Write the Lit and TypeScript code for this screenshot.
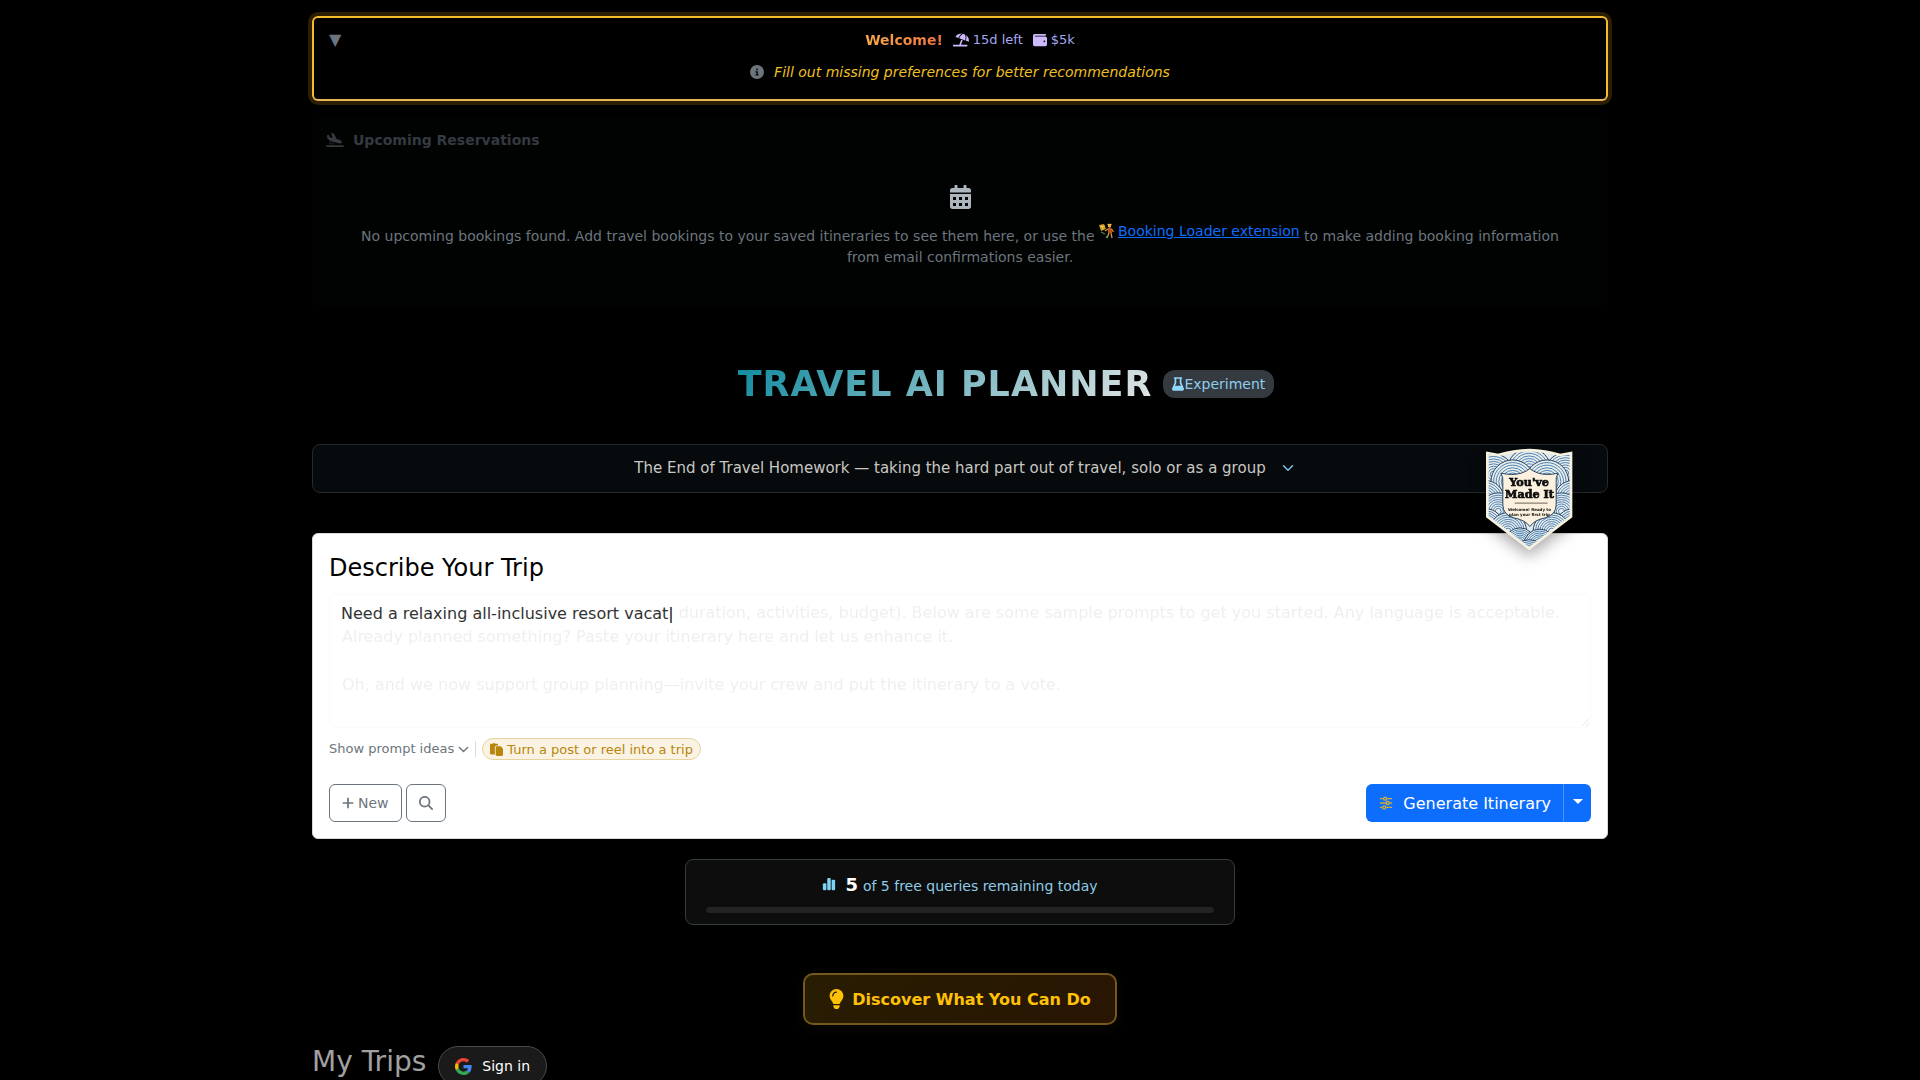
import { LitElement, html, css, svg } from "lit";
import { customElement, state } from "lit/decorators.js";

const google = svg`
  <path fill="#EA4335" d="M24 9.5c3.54 0 6.71 1.22 9.21 3.6l6.85-6.85C35.9 2.38 30.47 0 24 0 14.62 0 6.51 5.38 2.56 13.22l7.98 6.19C12.43 13.72 17.74 9.5 24 9.5z"/>
  <path fill="#4285F4" d="M46.98 24.55c0-1.57-.15-3.09-.38-4.55H24v9.02h12.94c-.58 2.96-2.26 5.48-4.78 7.18l7.73 6c4.51-4.18 7.09-10.36 7.09-17.65z"/>
  <path fill="#FBBC05" d="M10.53 28.59A14.5 14.5 0 0 1 9.77 24c0-1.6.27-3.14.76-4.59l-7.98-6.19A23.93 23.93 0 0 0 0 24c0 3.88.92 7.54 2.56 10.78l7.97-6.19z"/>
  <path fill="#34A853" d="M24 48c6.48 0 11.93-2.13 15.89-5.81l-7.73-6c-2.15 1.45-4.92 2.3-8.16 2.3-6.26 0-11.57-4.22-13.47-9.91l-7.98 6.19C6.51 42.62 14.62 48 24 48z"/>`;

const icons = {
  beach: svg`<path d="M115.38 136.9l102.11 37.18c35.19-81.54 86.21-144.29 139-173.7-95.88-4.89-188.78 36.96-248.53 111.8-6.69 8.4-2.66 21.05 7.42 24.72zm132.25 48.16l238.48 86.83c35.76-121.38 18.7-231.66-42.63-253.98-7.4-2.7-15.13-4-23.09-4-58.02.01-128.27 69.17-172.76 171.15zM521.48 60.5c6.22 16.3 10.83 34.6 13.2 55.19 5.74 49.89-1.42 108.23-18.95 166.98l102.62 37.36c10.09 3.67 21.31-3.43 21.57-14.17 2.32-95.69-41.91-187.44-118.44-245.36zM560 447.98H321.06L386 269.5l-60.14-21.9-72.9 200.37H16c-8.84 0-16 7.16-16 16.01v32.01C0 504.83 7.16 512 16 512h544c8.84 0 16-7.17 16-16.01v-32.01c0-8.84-7.16-16-16-16z"/>`,
  wallet: svg`<path fill-rule="evenodd" d="M64 32C28.700 32 0 60.700 0 96v320c0 35.300 28.700 64 64 64h384c35.300 0 64-28.700 64-64V192c0-35.300-28.700-64-64-64H80c-8.800 0-16-7.200-16-16s7.200-16 16-16h368c17.700 0 32-14.300 32-32s-14.300-32-32-32H64zm352 240a32 32 0 1 1 0 64 32 32 0 1 1 0-64z"/>`,
  info: svg`<path d="M256 512A256 256 0 1 0 256 0a256 256 0 1 0 0 512zM216 336l24 0 0-64-24 0c-13.3 0-24-10.7-24-24s10.7-24 24-24l48 0c13.3 0 24 10.7 24 24l0 88 8 0c13.3 0 24 10.7 24 24s-10.7 24-24 24l-80 0c-13.3 0-24-10.7-24-24s10.7-24 24-24zm40-208a32 32 0 1 1 0 64 32 32 0 1 1 0-64z"/>`,
  arrival: svg`<path d="M624 448H16c-8.84 0-16 7.16-16 16v32c0 8.84 7.16 16 16 16h608c8.84 0 16-7.16 16-16v-32c0-8.84-7.16-16-16-16zM44.81 205.66l88.74 80a62.607 62.607 0 0 0 25.47 13.93l287.6 78.35c26.48 7.21 54.56 8.72 81 1.36 29.67-8.27 43.44-21.21 47.25-35.71 3.83-14.5-1.73-32.71-23.37-54.96-19.28-19.82-44.35-32.79-70.83-40l-97.51-26.56L282.8 30.22c-1.51-5.81-5.95-10.35-11.66-11.91L206.05.58c-10.56-2.88-20.9 5.32-20.71 16.44l47.92 164.21-102.2-27.84-27.59-67.88c-1.93-4.89-6.01-8.57-11.02-9.93L52.72 64.75c-10.34-2.82-20.53 5-20.72 15.88l.23 101.78c.19 8.91 6.03 17.34 12.58 23.25z"/><circle cx="144" cy="368" r="30"/><circle cx="240" cy="392" r="30"/>`,
  calendar: svg`<path fill-rule="evenodd" d="M0 464c0 26.500 21.500 48 48 48h352c26.500 0 48-21.500 48-48V192H0v272zM64 256h64v64H64zM192 256h64v64h-64zM320 256h64v64h-64zM64 384h64v64H64zM192 384h64v64h-64zM320 384h64v64h-64zM400 64h-48V16c0-9-7-16-16-16h-32c-9 0-16 7-16 16v48H160V16c0-9-7-16-16-16h-32c-9 0-16 7-16 16v48H48C21.500 64 0 85.500 0 112v48h448v-48c0-26.500-21.500-48-48-48z"/>`,
  flask: svg`<path fill-rule="evenodd" d="M96 0C78 0 64 14 64 32s14 32 32 32v149L11 406c-7 11-11 24-11 37 0 38 31 69 69 69h310c38 0 69-31 69-69 0-13-4-26-11-37L352 213V64c18 0 32-14 32-32S370 0 352 0H96zm64 213V64h128v149c0 12 3 24 9 34l40 73H111l40-73c6-10 9-22 9-34z"/>`,
  bulb: svg`<path d="M272 384c9.6-31.9 29.5-59.1 49.2-86.2c5.200-7.100 10.400-14.200 15.400-21.400c19.800-28.500 31.400-63 31.400-100.300C368 78.800 289.200 0 192 0S16 78.800 16 176c0 37.300 11.600 71.900 31.400 100.300c5 7.200 10.200 14.300 15.400 21.400c19.800 27.100 39.700 54.400 49.200 86.200l160 0zM192 512c44.200 0 80-35.800 80-80l0-16-160 0 0 16c0 44.200 35.800 80 80 80zM112 176c0 8.800-7.200 16-16 16s-16-7.200-16-16c0-61.900 50.100-112 112-112c8.800 0 16 7.200 16 16s-7.200 16-16 16c-44.200 0-80 35.800-80 80z"/>`,
  bars: svg`<rect x="0" y="224" width="128" height="256" rx="44"/><rect x="160" y="32" width="128" height="448" rx="44"/><rect x="320" y="96" width="128" height="384" rx="44"/>`,
  paste: svg`<path d="M160 0c-24 0-44 13-55 32H48C21 32 0 53 0 80v320c0 27 21 48 48 48h144V176c0-44 36-80 80-80h48V80c0-27-21-48-48-48h-57C204 13 184 0 160 0zm-48 88h96v-8h-96z"/><path d="M272 128c-26 0-48 22-48 48v288c0 26 22 48 48 48h192c26 0 48-22 48-48V243c0-13-5-25-14-34l-67-67c-9-9-21-14-34-14z"/>`,
  search: svg`<path fill-rule="evenodd" d="M416 208c0 45.900-14.900 88.300-40 122.700L502.600 457.400c12.500 12.500 12.500 32.800 0 45.300s-32.800 12.500-45.300 0L330.700 376c-34.400 25.200-76.800 40-122.700 40C93.100 416 0 322.900 0 208S93.100 0 208 0S416 93.100 416 208zM208 352a144 144 0 1 0 0-288 144 144 0 1 0 0 288z"/>`,
  plus: svg`<path d="M256 80c0-17.700-14.300-32-32-32s-32 14.300-32 32v144H48c-17.700 0-32 14.300-32 32s14.300 32 32 32h144v144c0 17.700 14.300 32 32 32s32-14.300 32-32V288h144c17.700 0 32-14.300 32-32s-14.300-32-32-32H256V80z"/>`,
  chevron: svg`<path d="M2 5l6 6 6-6" fill="none" stroke="currentColor" stroke-width="2" stroke-linecap="round" stroke-linejoin="round"/>`,
  sliders: svg`<g fill="none" stroke="#c9ab3e" stroke-width="1.600"><path d="M1 3h4M9 3h6M1 8h7M12 8h3M1 13h3M8 13h7"/><circle cx="7" cy="3" r="1.700"/><circle cx="10" cy="8" r="1.700"/><circle cx="6" cy="13" r="1.700"/></g>`,
  porter: svg`<path d="M0 2l5-1 2 5-5 2z" fill="#c99a1c"/><path d="M1 4l5-1M3 2l1 5" stroke="#f4d35e" stroke-width=".8"/><path d="M2 9l4 2" stroke="#4f7d5c" stroke-width="1.300"/><circle cx="10.500" cy="3" r="1.700" fill="#e3b341"/><path d="M8.500 1.500h4" stroke="#f0c040" stroke-width="1.300"/><path d="M9 5h3.500l.5 5H9z" fill="#c4521c"/><path d="M9 6L6 8M12.500 6l2 3" stroke="#e3a03b" stroke-width="1.200"/><path d="M10 10l-2 5M12 10l1 5" stroke="#c69a4a" stroke-width="1.300"/><path d="M8 13l-1 2" stroke="#3f8a4e" stroke-width="1.300"/>`,
};

const icon = (name: keyof typeof icons, box: string, cls: string) =>
  html`<svg class="icon ${cls}" viewBox=${box} aria-hidden="true">${icons[name]}</svg>`;

/* Overlapping scallops, drawn back to front */
const swells: Array<[number, number, number]> = [
  [128, 60, 66], [20, 74, 62], [238, 70, 62], [78, 96, 66], [182, 96, 66],
  [-6, 150, 58], [262, 150, 58], [34, 186, 56], [226, 186, 56],
  [-4, 232, 54], [262, 232, 54], [64, 246, 56], [196, 246, 56],
  [100, 282, 46], [160, 288, 48], [128, 322, 50],
];
const rings = [1, 0.88, 0.76, 0.64, 0.52, 0.4, 0.28, 0.16];
const shield = "M1 9 L34 15 Q80 2 129 0 Q176 2 222 15 L255 9 V202 L128 299 L1 202 Z";
const crest = "M42 70 Q78 78 104 70 Q122 64 130 56 Q138 64 156 70 Q182 78 216 70 Q208 82 210 98 V166 Q210 196 176 206 Q144 212 130 232 Q116 212 82 206 Q48 196 48 166 V98 Q50 82 42 70 Z";

@customElement("made-it-badge")
export class MadeItBadge extends LitElement {
  static styles = css`
    :host { display: block; }
    .badge { display: block; width: 85px; height: 99px; overflow: visible; filter: drop-shadow(0 6px 8px rgba(0, 0, 0, 0.35)); }
    .big { font: 900 34px "DejaVu Serif", serif; stroke: #0d0d0d; stroke-width: 2px; }
    .small { font: 700 12px "DejaVu Sans", sans-serif; }
  `;
  render() {
    return html`<svg class="badge" viewBox="0 0 258 300" role="img" aria-label="You've Made It">
      <defs><clipPath id="edge"><path d=${shield} /></clipPath></defs>
      <path d=${shield} fill="#dfe9ee" />
      <g clip-path="url(#edge)">
        ${swells.map(([x, y, r]) => rings.map((k) => svg`<circle cx=${x} cy=${y} r=${r * k} fill="#e9eeeb" stroke=${k === 1 ? "#233f60" : "#4a80b4"} stroke-width="3"/>`))}
      </g>
      <path d=${shield} fill="none" stroke="#f7f1e0" stroke-width="8" />
      <path d=${crest} fill="#fbf1de" stroke="#27415c" stroke-width="3" />
      <g fill="#0d0d0d" text-anchor="middle">
        <text class="big" x="128" y="108">You've</text>
        <text class="big" x="129" y="145">Made It</text>
        <text class="small" x="129" y="184">Welcome! Ready to</text>
        <text class="small" x="129" y="199">plan your first trip</text>
      </g>
      <path d="M84 161h100" stroke="#6b6252" stroke-width="3" />
    </svg>`;
  }
}

@customElement("app-root")
export class AppRoot extends LitElement {
  @state() private typed = "Need a relaxing all-inclusive resort vacat";

  static styles = css`
    :host {
      display: block;
      min-height: 100vh;
      background: #000;
      color: #a0a0a0;
      font-family: "DejaVu Sans", sans-serif;
      font-size: 16px;
      line-height: 24px;
    }
    *, *::before, *::after { box-sizing: border-box; }
    h1, h2, h3, p { margin: 0; font-weight: 400; }
    button, textarea { font-family: inherit; margin: 0; cursor: pointer; }
    .icon { fill: currentColor; flex: none; width: 14px; height: 14px; }
    .page { max-width: 1296px; margin: 0 auto; padding-top: 16px; display: flex; flex-direction: column; }

    .welcome {
      position: relative;
      border: 2px solid #f5bd2e;
      border-bottom-color: #e8b95c;
      border-radius: 6px;
      box-shadow: 0 0 0 4px #2b1e02;
      padding: 12px 14px 17px;
      display: flex; flex-direction: column; align-items: center; gap: 12px;
    }
    .toggle { position: absolute; left: 15px; top: 12px; border: 0; background: none; padding: 0; color: #6c757d; font-size: 16px; line-height: 20px; }
    .row { display: flex; align-items: center; font-size: 14px; line-height: 20px; }
    .greeting { padding-left: 20px; }
    .hello { font-weight: 700; background: linear-gradient(90deg, #f9a84b, #f4733d); -webkit-background-clip: text; background-clip: text; color: transparent; margin-right: 10px; }
    .stat { display: flex; align-items: center; gap: 4px; color: #a5a8f0; font-size: 13px; margin-right: 10px; }
    .stat .icon { color: #cdb9fb; }
    .stat:last-child { margin-right: 0; }
    .wide { width: 16px; }
    .hint { color: #f0c020; font-style: italic; gap: 10px; }
    .hint .icon { color: #6c757d; }

    .upcoming { margin-top: 16px; border-radius: 8px; background: #010303; padding: 12px 14px 38px; }
    .subhead { display: flex; align-items: center; gap: 9px; font-size: 14px; line-height: 22px; font-weight: 700; color: #343a40; }
    .subhead .icon { width: 18px; }
    .empty { padding: 34px 30px 0; display: flex; flex-direction: column; align-items: center; gap: 14px; text-align: center; font-size: 14px; line-height: 21px; color: #6c757d; }
    .empty .icon { width: 21px; height: 24px; color: #adb5bd; }
    .loader { display: inline-flex; align-items: center; gap: 3px; vertical-align: 2px; line-height: 16px; color: #0d6efd; }
    .loader .icon { width: 16px; height: 16px; }

    .title { margin-top: 50px; height: 56px; padding-left: 92px; display: flex; align-items: center; justify-content: center; gap: 11px; }
    .title h1 { font-size: 35px; line-height: 48px; font-weight: 700; letter-spacing: 1px; background: linear-gradient(135deg, #0e8a9e 0%, #e6e6e6 100%); -webkit-background-clip: text; background-clip: text; color: transparent; }
    .tag { display: flex; align-items: center; height: 28px; padding: 0 9px; border-radius: 12px; background: #343a3f; color: #8ecdf0; font-size: 14px; }
    .tag .icon { width: 12px; color: #8fd8fb; }

    .banner-wrap { position: relative; margin-top: 32px; }
    .banner { width: 100%; height: 49px; border: 1px solid #212a2f; border-radius: 8px; background: #060a0d; color: #c9c7c2; font-size: 15px; padding: 0 0 2px 8px; display: flex; align-items: center; justify-content: center; gap: 16px; }
    .banner .icon { width: 12px; height: 12px; color: #7cc4e8; }
    made-it-badge { position: absolute; right: 36px; top: 6px; z-index: 2; }

    .card { margin-top: 40px; background: #fff; border: 1px solid #d8d8d8; border-radius: 6px; padding: 16px; display: flex; flex-direction: column; }
    .card h2 { font-size: 24px; line-height: 36px; color: #000; }
    .field { position: relative; margin-top: 8px; display: flex; }
    .box { flex: 1; height: 134px; padding: 6px 12px; border: 1px solid #dee2e6; border-radius: 6px; background: #fff; font-size: 16px; line-height: 24px; opacity: 0.15; }
    .box::placeholder { color: #999; opacity: 1; }
    .typed { position: absolute; left: 12px; top: 8px; font-size: 16px; line-height: 24px; color: #333; background: rgba(255, 255, 255, 0.75); pointer-events: none; }
    .caret { color: #111; }
    .ideas { margin-top: 10px; display: flex; align-items: center; gap: 6px; font-size: 13px; line-height: 20px; }
    .link { border: 0; background: none; padding: 0; display: flex; align-items: center; gap: 4px; color: #6c757d; font-size: 13px; line-height: 20px; }
    .link .icon { width: 11px; height: 11px; }
    .sep { width: 1px; height: 16px; background: #d9dce0; }
    .pill { display: flex; align-items: center; gap: 4px; height: 22px; padding: 0 7px; border: 1px solid #e6d3a0; border-radius: 11px; background: #faf3e3; color: #b8860b; font-size: 13px; }
    .pill .icon { width: 13px; height: 13px; }
    .actions { margin-top: 24px; display: flex; gap: 4px; }
    .outline { height: 38px; padding: 0 12px; border: 1px solid #6c757d; border-radius: 6px; background: #fff; color: #6c757d; font-size: 14px; display: flex; align-items: center; gap: 4px; }
    .outline .icon { width: 14px; }
    .outline .plus { width: 12px; }
    .split { margin-left: auto; display: flex; }
    .go { height: 38px; padding: 0 12px 0 13px; border: 0; border-radius: 6px 0 0 6px; background: #0d6efd; color: #fff; font-size: 16px; display: flex; align-items: center; gap: 10px; }
    .more { width: 28px; padding: 0 0 3px; border: 0; border-left: 1px solid #4d94fe; border-radius: 0 6px 6px 0; background: #0d6efd; display: flex; align-items: center; justify-content: center; }
    .more::after { content: ""; border: 5px solid transparent; border-top-color: #fff; border-bottom: 0; }

    .quota { margin-top: 20px; align-self: center; width: 100%; max-width: 550px; border: 1px solid #343d42; border-radius: 8px; background: #0d0d0d; padding: 13px 20px 11px; color: #8ecbe6; }
    .count { display: flex; align-items: baseline; justify-content: center; gap: 5px; font-size: 14px; line-height: 24px; }
    .count strong { color: #fff; font-size: 18px; margin-left: 4px; }
    .count .icon { color: #7fd4f5; }
    .track { display: block; margin-top: 9px; height: 6px; border-radius: 3px; background: #232323; }

    .discover { align-self: center; margin-top: 48px; height: 52px; padding: 0 24px; border: 2px solid #75591a; border-radius: 10px; background: linear-gradient(135deg, #281d02, #281502); color: #ffc107; font-size: 16px; font-weight: 700; display: flex; align-items: center; gap: 8px; box-shadow: 0 4px 15px rgba(255, 193, 7, 0.04); }
    .discover .icon { width: 15px; height: 20px; }

    .trips { margin-top: 20px; display: flex; align-items: center; gap: 12px; }
    .trips h2 { font-size: 28px; line-height: 34px; padding-bottom: 8px; }
    .signin { height: 40px; padding: 0 16px; border: 1px solid #4a4a4a; border-radius: 20px; background: #1a1a1a; color: #fff; font-size: 14px; display: flex; align-items: center; gap: 10px; }
    .signin .icon { width: 17px; height: 17px; }
  `;

  render() {
    return html`<main class="page">
      <section class="welcome">
        <button class="toggle" aria-label="Collapse">▼</button>
        <div class="row greeting">
          <span class="hello">Welcome!</span>
          <span class="stat">${icon("beach", "0 0 640 512", "wide")}15d left</span>
          <span class="stat">${icon("wallet", "0 0 512 512", "")}$5k</span>
        </div>
        <div class="row hint">${icon("info", "0 0 512 512", "")}<span>Fill out missing preferences for better recommendations</span></div>
      </section>

      <section class="upcoming">
        <h3 class="subhead">${icon("arrival", "0 0 640 512", "")}Upcoming Reservations</h3>
        <div class="empty">
          ${icon("calendar", "0 0 448 512", "")}
          <p>No upcoming bookings found. Add travel bookings to your saved itineraries to see them here, or use the <a class="loader" href="#">${icon("porter", "0 0 16 16", "")}Booking Loader extension</a> to make adding booking information from email confirmations easier.</p>
        </div>
      </section>

      <header class="title">
        <h1>TRAVEL AI PLANNER</h1>
        <span class="tag">${icon("flask", "0 0 448 512", "")}Experiment</span>
      </header>

      <div class="banner-wrap">
        <button class="banner">The End of Travel Homework — taking the hard part out of travel, solo or as a group ${icon("chevron", "0 0 16 16", "")}</button>
        <made-it-badge></made-it-badge>
      </div>

      <section class="card">
        <h2><label for="prompt">Describe Your Trip</label></h2>
        <div class="field">
          <textarea class="box" id="prompt" placeholder=${"Describe your next vacation (destination, duration, activities, budget). Below are some sample prompts to get you started. Any language is acceptable.\nAlready planned something? Paste your itinerary here and let us enhance it.\n\nOh, and we now support group planning—invite your crew and put the itinerary to a vote."}></textarea>
          <span class="typed">${this.typed}<span class="caret">|</span></span>
        </div>
        <div class="ideas">
          <button class="link">Show prompt ideas ${icon("chevron", "0 0 16 16", "")}</button>
          <span class="sep"></span>
          <button class="pill">${icon("paste", "0 0 512 512", "")}Turn a post or reel into a trip</button>
        </div>
        <div class="actions">
          <button class="outline">${icon("plus", "0 0 448 512", "plus")}New</button>
          <button class="outline" aria-label="Search">${icon("search", "0 0 512 512", "")}</button>
          <div class="split">
            <button class="go">${icon("sliders", "0 0 16 16", "")}Generate Itinerary</button>
            <button class="more" aria-label="More options"></button>
          </div>
        </div>
      </section>

      <section class="quota">
        <div class="count">${icon("bars", "0 0 448 512", "")}<strong>5</strong><span>of 5 free queries remaining today</span></div>
        <span class="track"></span>
      </section>

      <button class="discover">${icon("bulb", "0 0 384 512", "")}Discover What You Can Do</button>

      <section class="trips">
        <h2>My Trips</h2>
        <button class="signin"><svg class="icon" viewBox="0 0 48 48" aria-hidden="true">${google}</svg>Sign in</button>
      </section>
    </main>`;
  }
}
